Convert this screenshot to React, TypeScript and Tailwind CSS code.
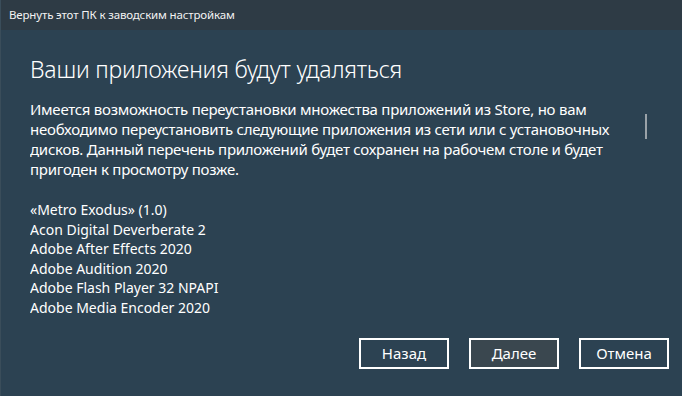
const apps = [
  '«Metro Exodus» (1.0)',
  'Acon Digital Deverberate 2',
  'Adobe After Effects 2020',
  'Adobe Audition 2020',
  'Adobe Flash Player 32 NPAPI',
  'Adobe Media Encoder 2020',
]

const App = () => {
  return (
    <div className="w-[682px] h-[396px] flex flex-col bg-[#2c4252] text-white border-l border-[#3a4d5a] font-['Segoe_UI','Noto_Sans',sans-serif] overflow-hidden">
      {/* Title bar */}
      <div className="h-[30px] shrink-0 bg-[#2e3b45] flex items-center px-2 text-[11.5px] tracking-[-0.15px] text-[#f2f2f2]">
        Вернуть этот ПК к заводским настройкам
      </div>

      {/* Content */}
      <div className="relative flex-1 flex flex-col pl-[29px] pr-4 pt-[23px]">
        <h1 className="text-[23px] leading-[32px] font-light tracking-[-0.2px]">
          Ваши приложения будут удаляться
        </h1>

        <div className="mt-[14px] h-[220px] overflow-hidden">
          <p className="text-[15px] leading-[20px] tracking-[-0.25px]">
            Имеется возможность переустановки множества приложений из Store, но вам
            <br />
            необходимо переустановить следующие приложения из сети или с установочных
            <br />
            дисков. Данный перечень приложений будет сохранен на рабочем столе и будет
            <br />
            пригоден к просмотру позже.
          </p>
          <ul className="mt-[21px] text-[14px] leading-[19.6px] tracking-[0px]">
            {apps.map((a, i) => (
              <li key={i}>{a}</li>
            ))}
          </ul>
        </div>

        {/* scrollbar thumb */}
        <div className="absolute left-[644px] top-[84px] w-[2px] h-[25px] bg-[#9aa2a8]" />

        <div className="mt-auto mb-[27px] flex justify-end gap-5 mr-[-3px]">
          <button className="w-[90px] h-[31px] border-2 border-white text-[15px] bg-transparent">
            Назад
          </button>
          <button className="w-[90px] h-[31px] border-2 border-white text-[15px] bg-[#3a474f]">
            Далее
          </button>
          <button className="w-[90px] h-[31px] border-2 border-white text-[15px] bg-transparent">
            Отмена
          </button>
        </div>
      </div>
    </div>
  )
}

export default App
